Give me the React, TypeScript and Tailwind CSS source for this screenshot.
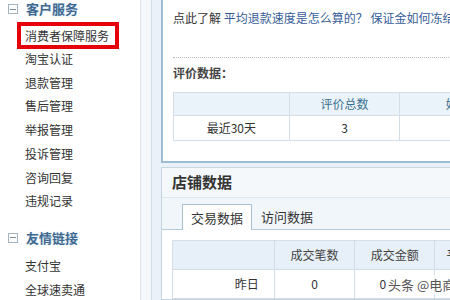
// Seller center page — sidebar menu + shop data panels
const font = "font-['Noto_Sans_CJK_SC','Noto_Sans',sans-serif]";

function Toggle() {
  return (
    <span className="flex h-[10px] w-[10px] items-center justify-center border border-[#a3b3c0] bg-white">
      <span className="h-px w-[6px] bg-[#7d8e9b]" />
    </span>
  );
}

function GroupHeader({ title }: { title: string }) {
  return (
    <div className="flex h-[18px] items-center">
      <div className="ml-[8px] mr-[8px]">
        <Toggle />
      </div>
      <span className="text-[13px] font-bold text-[#3f6990] [text-shadow:0_0_3px_#d3e3f2]">{title}</span>
    </div>
  );
}

function Sidebar() {
  const items = ["淘宝认证", "退款管理", "售后管理", "举报管理", "投诉管理", "咨询回复", "违规记录"];
  return (
    <aside className="w-[141px] shrink-0 border-r border-[#dbe4ec] bg-white text-[12px] text-[#333]">
      <div>
        <GroupHeader title="客户服务" />
        <div className="ml-[17px] mt-[4px] flex h-[27px] w-[102px] items-center border-4 border-[#e5000a] pl-[4px]">
          消费者保障服务
        </div>
        <ul className="-mt-[2px] leading-[23.7px]">
          {items.map((t) => (
            <li key={t} className="pl-[25px]">{t}</li>
          ))}
        </ul>
      </div>
      <div className="mt-[16px]">
        <GroupHeader title="友情链接" />
        <ul className="mt-[7px] leading-[23.7px]">
          <li className="pl-[25px]">支付宝</li>
          <li className="pl-[25px]">全球速卖通</li>
        </ul>
      </div>
    </aside>
  );
}

function RatingPanel() {
  return (
    <section className="h-[163px] w-[420px] border-b-2 border-l-2 border-[#9cbcd1] bg-white pl-[10px] text-[12px] text-[#333]">
      <p className="whitespace-nowrap pt-[8px] leading-[20px]">
        点此了解{" "}
        <a className="text-[#365d98]">平均退款速度是怎么算的？</a>{" "}
        <a className="text-[#365d98]">保证金如何冻结？</a>
      </p>
      <div className="mt-[29px] border-t border-dotted border-[#b9b9b9]" />
      <h3 className="mt-[6px] text-[12px] font-bold leading-[18px] text-[#444]">评价数据：</h3>
      <table className="mt-[10px] w-[355px] border-collapse text-center">
        <thead>
          <tr className="h-[23px] bg-[#ebf3fa] text-[#3a7190]">
            <th className="w-[116px] border border-[#d3dee8] font-normal" />
            <th className="w-[111px] border border-[#d3dee8] font-normal">评价总数</th>
            <th className="w-[128px] border border-[#d3dee8] font-normal">好评率</th>
          </tr>
        </thead>
        <tbody>
          <tr className="h-[25px]">
            <td className="border border-[#d3dee8]">最近30天</td>
            <td className="border border-[#d3dee8]">3</td>
            <td className="border border-[#d3dee8]" />
          </tr>
        </tbody>
      </table>
    </section>
  );
}

function ShopPanel() {
  return (
    <section className="relative mt-[4px] w-[420px] border border-r-0 border-[#c4d5e1] bg-white text-[12px] text-[#333]">
      <div className="flex h-[30px] items-center border-b border-[#e0e9f0] bg-[#f5f8fb] pl-[10px]">
        <h2 className="text-[15px] font-bold text-[#333]">店铺数据</h2>
      </div>
      <div className="flex h-[32px] items-end border-b border-[#b6cad8] bg-[#f1f6fa] pl-[20px]">
        <div className="-mb-px flex h-[26px] w-[70px] items-center justify-center border border-b-0 border-[#a9c1d2] bg-white text-[13px]">
          交易数据
        </div>
        <div className="flex h-[25px] items-center pl-[9px] text-[13px]">访问数据</div>
      </div>
      <table className="ml-[10px] mt-[10px] w-[347px] border-collapse text-center">
        <thead>
          <tr className="h-[29px] bg-[#e7f0f8] text-[#444]">
            <th className="w-[102px] border border-[#d3dee8] font-normal" />
            <th className="w-[81px] border border-[#d3dee8] font-normal">成交笔数</th>
            <th className="w-[80px] border border-[#d3dee8] font-normal">成交金额</th>
            <th className="w-[84px] border border-[#d3dee8] font-normal">平均客单价</th>
          </tr>
        </thead>
        <tbody>
          <tr className="h-[29px]">
            <td className="border border-[#d3dee8] pr-[15px] text-right">昨日</td>
            <td className="border border-[#d3dee8]">0</td>
            <td className="border border-[#d3dee8] pl-[24px] text-left">0</td>
            <td className="border border-[#d3dee8]" />
          </tr>
        </tbody>
      </table>
    </section>
  );
}

export default function App() {
  return (
    <div className={`relative flex h-[300px] w-[450px] overflow-hidden bg-white ${font}`}>
      <Sidebar />
      <div className="w-[11px] shrink-0 border-r border-[#d2dee8] bg-[#f5f8fb]" />
      <main className="min-w-0 flex-1 bg-[#eaf1f8] pl-[9px]">
        <RatingPanel />
        <ShopPanel />
      </main>
      <div className="absolute left-[386px] top-[275px] whitespace-nowrap rounded-sm bg-white/60 px-[2px] text-[13px] text-[#555] [text-shadow:0_0_2px_#fff]">
        头条 @电商圈
      </div>
    </div>
  );
}
